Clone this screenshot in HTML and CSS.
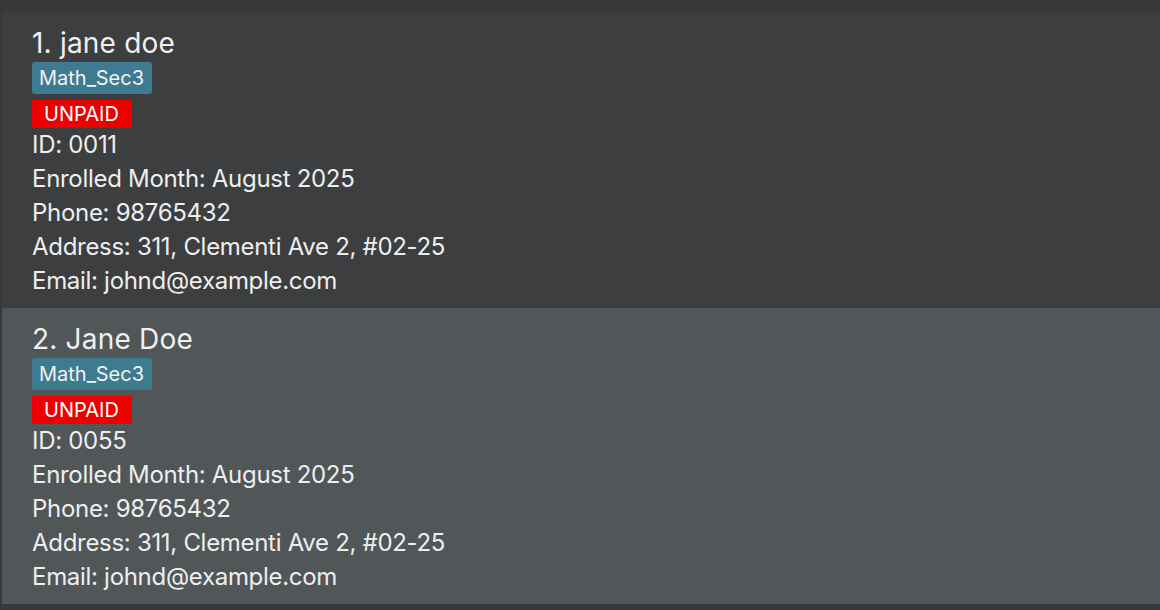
FILE: index.html
```html
<!DOCTYPE html>
<html>
<head>
<meta charset="utf-8">
<link rel="stylesheet" href="styles.css">
</head>
<body>
<div class="list">
  <div class="card card-even">
    <div class="name">1. jane doe</div>
    <div class="tags"><span class="tag">Math_Sec3</span></div>
    <div class="status"><span class="unpaid">UNPAID</span></div>
    <div class="field">ID: 0011</div>
    <div class="field">Enrolled Month: August 2025</div>
    <div class="field">Phone: 98765432</div>
    <div class="field">Address: 311, Clementi Ave 2, #02-25</div>
    <div class="field">Email: johnd@example.com</div>
  </div>
  <div class="card card-odd">
    <div class="name">2. Jane Doe</div>
    <div class="tags"><span class="tag">Math_Sec3</span></div>
    <div class="status"><span class="unpaid">UNPAID</span></div>
    <div class="field">ID: 0055</div>
    <div class="field">Enrolled Month: August 2025</div>
    <div class="field">Phone: 98765432</div>
    <div class="field">Address: 311, Clementi Ave 2, #02-25</div>
    <div class="field">Email: johnd@example.com</div>
  </div>
</div>
</body>
</html>
```
FILE: styles.css
```css
html, body {
  margin: 0;
  padding: 0;
  background: #383838;
  height: 610px;
  overflow: hidden;
}
body {
  font-family: Inter, "Liberation Sans", sans-serif;
  color: #eeeeee;
}
.list {
  padding: 12px 0 6px 2px;
  display: flex;
  flex-direction: column;
}
.card {
  height: 296px;
  box-sizing: border-box;
  padding: 14px 0 9px 30px;
  display: flex;
  flex-direction: column;
}
.card-even { background: #3c3e3f; }
.card-odd { background: #515658; }
.name {
  font-size: 28px;
  line-height: 34px;
  letter-spacing: 0.2px;
  color: #f0f0f0;
}
.tags {
  margin-top: 2px;
  display: flex;
}
.tag {
  display: inline-block;
  background: #3e7b91;
  color: #f2f2f2;
  font-size: 20px;
  line-height: 32px;
  height: 32px;
  padding: 0 8px 0 7px;
  letter-spacing: 0;
  border-radius: 3px;
}
.status {
  margin-top: 6px;
  display: flex;
}
.unpaid {
  display: inline-block;
  background: #ee0000;
  color: #ffffff;
  font-size: 20px;
  line-height: 28px;
  height: 28px;
  padding: 0 13px 0 12px;
  letter-spacing: 0;
}
.field {
  font-size: 24px;
  line-height: 34px;
  letter-spacing: -0.3px;
  color: #eeeeee;
}
```
